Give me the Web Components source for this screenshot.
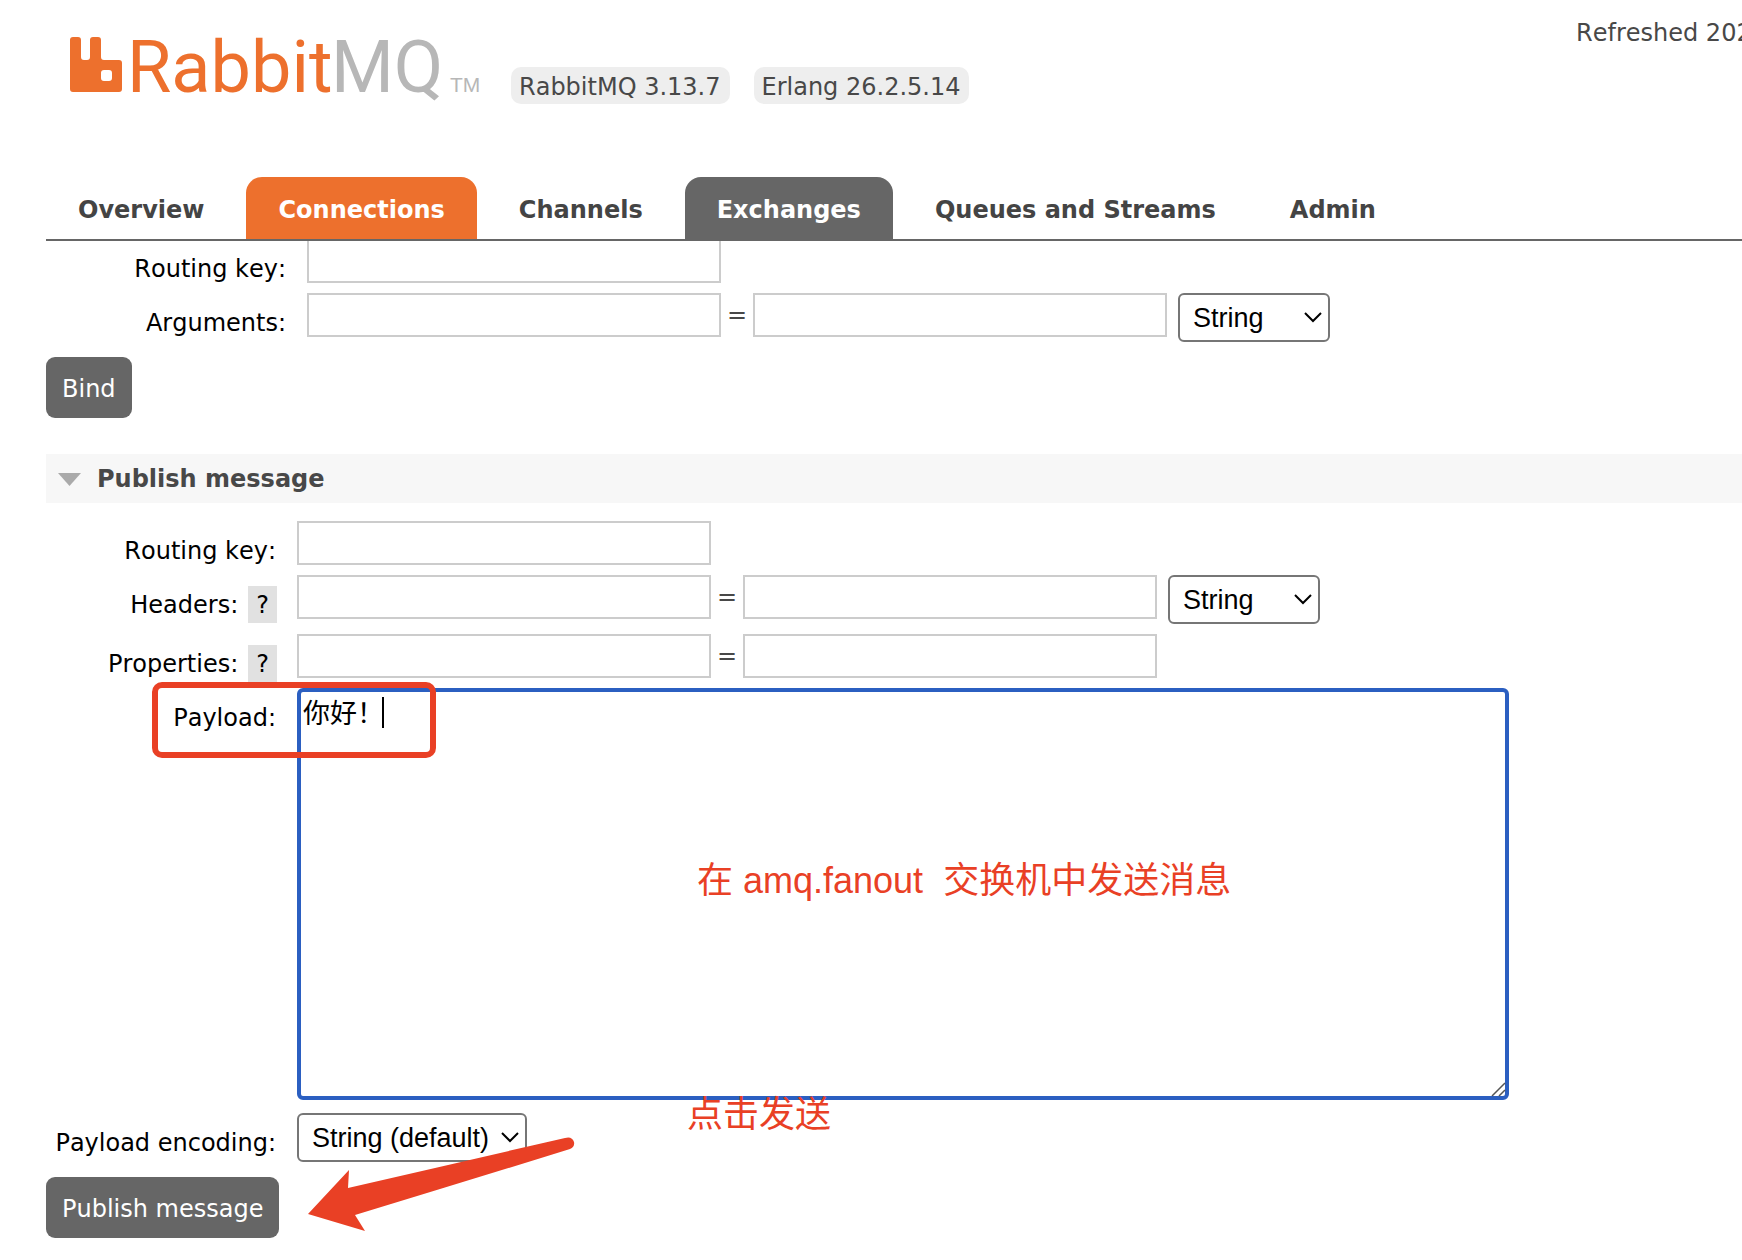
<!DOCTYPE html>
<html lang="en">
<head>
<meta charset="utf-8">
<title>RabbitMQ Management</title>
<style>
  html { background: #fff; }
  body {
    margin: 0;
    overflow-x: hidden;
    font-family: "DejaVu Sans", "Noto Sans CJK SC", sans-serif;
    font-size: 24px;
    font-kerning: none;
    line-height: 28px;
    color: #484848;
    --accent: #ed702d;
    --dark: #666;
    --annotation: #e94025;
    --gutter: 46px;
  }
</style>
</head>
<body>
<mq-header>
  <mq-logo slot="logo"></mq-logo>
  <mq-badge slot="versions">RabbitMQ 3.13.7</mq-badge>
  <mq-badge slot="versions">Erlang 26.2.5.14</mq-badge>
  <span slot="status">Refreshed 202</span>
  <mq-tab slot="tabs">Overview</mq-tab>
  <mq-tab slot="tabs" state="hover">Connections</mq-tab>
  <mq-tab slot="tabs">Channels</mq-tab>
  <mq-tab slot="tabs" state="selected">Exchanges</mq-tab>
  <mq-tab slot="tabs">Queues and Streams</mq-tab>
  <mq-tab slot="tabs">Admin</mq-tab>
</mq-header>
<mq-main>
  <mq-form wide action="Bind">
    <mq-field label="Routing key:"></mq-field>
    <mq-field label="Arguments:" pair options="String"></mq-field>
  </mq-form>
  <mq-section heading="Publish message">
    <mq-form action="Publish message" arrow>
      <mq-field label="Routing key:"></mq-field>
      <mq-field label="Headers:" help pair options="String"></mq-field>
      <mq-field label="Properties:" help pair></mq-field>
      <mq-payload label="Payload:" value="你好！">
        <mq-note slot="note" style="left:400px;top:167px">在 amq.fanout&nbsp; 交换机中发送消息</mq-note>
        <mq-note slot="note" style="left:390px;top:401px">点击发送</mq-note>
      </mq-payload>
      <mq-field label="Payload encoding:" options="String (default)" select-only></mq-field>
    </mq-form>
  </mq-section>
</mq-main>

<script>
function define(name, render) {
  customElements.define(name, class extends HTMLElement {
    connectedCallback() {
      if (this.shadowRoot) return;
      this.attachShadow({ mode: 'open' }).innerHTML = render(this);
    }
  });
}

define('mq-header', () => `
  <style>
    :host { display: block; position: relative; z-index: 1; padding-left: var(--gutter); overflow: hidden; }
    .top { display: flex; align-items: flex-start; height: 177px; }
    .versions { display: flex; gap: 24px; padding: 67px 0 0 20px; }
    .status { margin-left: auto; width: 166px; padding-top: 19px; white-space: nowrap; }
    nav { display: flex; gap: 10px; border-bottom: 2px solid var(--dark); }
  </style>
  <div class="top">
    <slot name="logo"></slot>
    <div class="versions"><slot name="versions"></slot></div>
    <div class="status"><slot name="status"></slot></div>
  </div>
  <nav><slot name="tabs"></slot></nav>`);

define('mq-logo', () => `
  <style>
    :host { display: block; padding: 24px 0 0 24px; }
    svg { display: block; overflow: visible; }
    text { font-family: Roboto, "Liberation Sans", sans-serif; font-size: 72px; }
    .tm { font-family: "Liberation Sans", sans-serif; font-size: 21px; }
  </style>
  <svg width="421" height="90" viewBox="0 0 421 90" role="img" aria-label="RabbitMQ">
    <path fill="#ed702d" fill-rule="evenodd" d="M3 13H8Q11 13 11 16V33Q11 36 14 36H17Q20 36 20 33V16Q20 13 23 13H28Q31 13 31 16V33Q31 36 34 36H49Q52 36 52 39V65Q52 68 49 68H3Q0 68 0 65V16Q0 13 3 13ZM34 46Q31 46 31 49V54Q31 57 34 57H39Q42 57 42 54V49Q42 46 39 46Z"/>
    <text x="57" y="68" fill="#ed702d">Rabbit</text>
    <text x="261" y="68" fill="#b7b7b7">MQ</text>
    <text x="380" y="68" fill="#b7b7b7" class="tm">TM</text>
  </svg>`);

define('mq-badge', () => `
  <style>
    :host { display: block; padding: 6px 9px 3px 8px; border-radius: 10px; background: #eee; white-space: nowrap; }
  </style><slot></slot>`);

define('mq-tab', () => `
  <style>
    :host { display: block; }
    a { display: block; padding: 19px 32px 15px; border-radius: 16px 16px 0 0; color: #444; font-weight: bold; text-decoration: none; white-space: nowrap; }
    :host([state=hover]) a { background: var(--accent); color: #fff; }
    :host([state=selected]) a { background: var(--dark); color: #fff; }
  </style><a href="#"><slot></slot></a>`);

define('mq-main', () => `
  <style>:host { display: block; margin-top: -2px; padding-left: var(--gutter); }</style><slot></slot>`);

define('mq-section', el => `
  <style>
    :host { display: block; margin-top: 36px; }
    h2 { display: flex; align-items: center; gap: 16px; margin: 0 0 18px; padding: 11px 12px 10px; background: #f7f7f7; font-size: 24px; line-height: 28px; }
    svg { display: block; }
  </style>
  <h2><svg width="23" height="13" viewBox="0 0 23 13"><path d="M0 0H23L11.5 13Z" fill="#aaa"/></svg>${el.getAttribute('heading')}</h2>
  <slot></slot>`);

define('mq-form', el => `
  <style>
    :host { display: block; --label-width: 231px; }
    :host([wide]) { --label-width: 241px; }
    .rows { display: flex; flex-direction: column; gap: 10px; }
    .actions { position: relative; margin-top: 15px; }
    button { display: block; box-sizing: border-box; height: 61px; padding: 2px 16px 0; border: 0; border-radius: 9px; background: var(--dark); color: #fff; font: inherit; font-kerning: none; }
    svg { position: absolute; left: 260px; top: -43px; }
  </style>
  <div class="rows"><slot></slot></div>
  <div class="actions">
    <button type="button">${el.getAttribute('action')}</button>
    ${el.hasAttribute('arrow') ? `<svg width="270" height="100" viewBox="0 0 270 100"><path fill="#e94025" d="M2 80L43 36L42 54Q150 29 259 4Q266 2 268 8Q269 13 264 15Q158 48 49 81L59 97Z"/></svg>` : ''}
  </div>`);

const labelStyles = `
  :host { display: flex; align-items: flex-start; gap: 20px; color: #000; }
  .label { display: flex; box-sizing: border-box; justify-content: flex-end; gap: 10px; width: var(--label-width); padding: 16px 1px 0 0; white-space: nowrap; }
  .label.helped { margin-bottom: -5px; padding: 11px 0 0; }
  .help { padding: 5px 8px 4px; background: #e1e1e1; color: #000; text-decoration: none; }
  .label.helped label { padding-top: 5px; }
`;

define('mq-field', el => {
  const text = el.getAttribute('label');
  const help = el.hasAttribute('help');
  const options = el.getAttribute('options');
  const only = el.hasAttribute('select-only');
  return `
  <style>
    ${labelStyles}
    :host([select-only]) { margin-top: 3px; }
    .controls { display: flex; align-items: flex-start; }
    input { box-sizing: border-box; width: 414px; height: 44px; margin: 0; padding: 4px; border: 2px solid #ccc; background: #fff; font: inherit; }
    .eq { width: 32px; color: #484848; line-height: 44px; text-align: center; }
    .pick { position: relative; margin-left: 11px; }
    .pick.only { margin: 0; }
    select { display: block; appearance: none; box-sizing: border-box; height: 49px; width: 152px; padding: 0 13px; border: 2px solid #767676; border-radius: 6px; background: #fff; color: #000; font: 27px "Liberation Sans", sans-serif; }
    .only select { width: 230px; }
    .pick svg { position: absolute; right: 8px; top: 18px; pointer-events: none; }
  </style>
  <div class="label ${help ? 'helped' : ''}"><label for="control">${text}</label>${help ? '<a class="help" href="#">?</a>' : ''}</div>
  <div class="controls">
    ${only ? '' : '<input id="control" type="text">'}
    ${el.hasAttribute('pair') ? `<span class="eq">=</span><input type="text" aria-label="${text} value">` : ''}
    ${options ? `<div class="pick ${only ? 'only' : ''}"><select ${only ? 'id="control"' : `aria-label="${text} type"`}><option>${options}</option></select><svg width="18" height="12" viewBox="0 0 18 12"><path d="M1 2L9 10L17 2" fill="none" stroke="#000" stroke-width="2"/></svg></div>` : ''}
  </div>`;
});

define('mq-payload', el => `
  <style>
    ${labelStyles}
    :host { position: relative; }
    .area { position: relative; }
    textarea { display: block; box-sizing: border-box; width: 1212px; height: 412px; margin: 0; padding: 4px 2px; border: 4px solid #2b5fc1; border-radius: 6px; outline: 0; resize: none; background: #fff; color: #000; font: 27px/32px "Noto Sans CJK SC", sans-serif; }
    .caret { position: absolute; left: 85px; top: 9px; width: 2px; height: 31px; background: #000; }
    .grip { position: absolute; right: 3px; bottom: 3px; }
    .mark { position: absolute; left: 106px; top: -6px; box-sizing: border-box; width: 284px; height: 76px; border: 6px solid var(--annotation); border-radius: 10px; pointer-events: none; }
  </style>
  <div class="label"><label for="control">${el.getAttribute('label')}</label></div>
  <div class="area">
    <textarea id="control">${el.getAttribute('value')}</textarea>
    <span class="caret"></span>
    <svg class="grip" width="15" height="15" viewBox="0 0 15 15"><path d="M1 14L14 1M8 14L14 8" stroke="#555" stroke-width="1.5"/></svg>
    <slot name="note"></slot>
  </div>
  <div class="mark"></div>`);

define('mq-note', () => `
  <style>
    :host { display: block; position: absolute; color: var(--annotation); font: 36px/52px "Liberation Sans", "Noto Sans CJK SC", sans-serif; white-space: nowrap; pointer-events: none; }
  </style><slot></slot>`);
</script>
</body>
</html>
